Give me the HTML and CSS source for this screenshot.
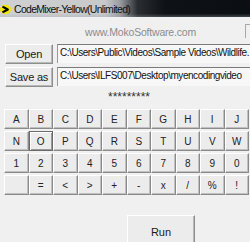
FILE: index.html
```html
<!DOCTYPE html>
<html>
<head>
<meta charset="utf-8">
<link rel="stylesheet" href="styles.css">
</head>
<body>
<div class="window">
  <div class="titlebar">
    <svg class="app-icon" width="11" height="11" viewBox="0 0 11 11">
      <ellipse cx="5.5" cy="5.5" rx="5.5" ry="4.8" fill="#f2e600"/>
      <path d="M2.5 2.6 L7.8 5.5 L2.5 8.4" fill="none" stroke="#000" stroke-width="2.2" stroke-linejoin="round"/>
    </svg>
    <span class="title">CodeMixer-Yellow(Unlimited)</span>
  </div>
  <div class="content">
    <div class="site-row">
      <span class="site">www.MokoSoftware.com</span>
      <span class="edge-box"></span>
    </div>
    <div class="file-row">
      <button class="btn file-btn">Open</button>
      <div class="field">C:\Users\Public\Videos\Sample Videos\Wildlife.</div>
    </div>
    <div class="file-row">
      <button class="btn file-btn">Save as</button>
      <div class="field">C:\Users\ILFS007\Desktop\myencodingvideo</div>
    </div>
    <div class="stars">*********</div>
    <div class="keys">
      <button class="key">A</button><button class="key">B</button><button class="key">C</button><button class="key">D</button><button class="key">E</button><button class="key">F</button><button class="key">G</button><button class="key">H</button><button class="key">I</button><button class="key">J</button>
      <button class="key">N</button><button class="key key-focus">O</button><button class="key">P</button><button class="key">Q</button><button class="key">R</button><button class="key">S</button><button class="key">T</button><button class="key">U</button><button class="key">V</button><button class="key">W</button>
      <button class="key">1</button><button class="key">2</button><button class="key">3</button><button class="key">4</button><button class="key">5</button><button class="key">6</button><button class="key">7</button><button class="key">8</button><button class="key">9</button><button class="key">0</button>
      <button class="key"></button><button class="key">=</button><button class="key">&lt;</button><button class="key">&gt;</button><button class="key">+</button><button class="key">-</button><button class="key">x</button><button class="key">/</button><button class="key">%</button><button class="key">!</button>
    </div>
    <div class="run-row">
      <button class="btn run-btn">Run</button>
    </div>
  </div>
</div>
</body>
</html>
```

FILE: styles.css
```css
* { box-sizing: border-box; }
html, body {
  margin: 0;
  padding: 0;
  width: 250px;
  height: 242px;
  overflow: hidden;
  background: #f0f0f0;
  font-family: "Liberation Sans", Arial, sans-serif;
}
.window {
  width: 250px;
  height: 242px;
  display: flex;
  flex-direction: column;
}
.titlebar {
  height: 17px;
  flex: none;
  display: flex;
  align-items: center;
  gap: 3px;
  background:
    linear-gradient(to bottom, rgba(255,255,255,0) 0, rgba(255,255,255,0) 80%, rgba(160,170,180,0.35) 100%),
    linear-gradient(to right, #cfd1d3 0, #c6c8ca 42%, #9a9c9f 48%, #2a2d31 55%, #0e1216 66%, #0b0f13 100%);
}
.app-icon { flex: none; margin-top: 1px; }
.title {
  font-size: 10.5px;
  letter-spacing: -0.7px;
  color: #101010;
  white-space: nowrap;
}
.content {
  flex: 1;
  display: flex;
  flex-direction: column;
  background: #f0f0f0;
}
.site-row {
  height: 27px;
  display: flex;
  align-items: center;
  position: relative;
  padding-left: 85px;
}
.site {
  margin-top: 2px;
  font-size: 10.5px;
  letter-spacing: -0.2px;
  color: #8c8c8c;
}
.edge-box {
  position: absolute;
  left: 245px;
  top: 7px;
  width: 10px;
  height: 14px;
  border-left: 1px solid #a8a8a8;
  border-top: 1px solid #a8a8a8;
}
.file-row {
  display: flex;
  align-items: flex-start;
  gap: 4px;
  margin-left: 5px;
  height: 23px;
}
.btn {
  font-family: inherit;
  background: #ececec;
  border: 1px solid;
  border-color: #ffffff #8e8e8e #8e8e8e #ffffff;
  box-shadow: inset -1px -1px 0 #b8b8b8;
  color: #1a1a1a;
  padding: 0;
  margin: 0;
}
.file-btn {
  width: 48px;
  height: 20px;
  font-size: 11px;
  letter-spacing: -0.2px;
}
.field {
  flex: 1;
  height: 19px;
  border-top: 1px solid #7a7a7a;
  border-left: 1px solid #9a9a9a;
  background: #f7f7f7;
  font-size: 10px;
  letter-spacing: -0.45px;
  color: #111;
  padding: 2px 0 0 2px;
  white-space: nowrap;
  overflow: hidden;
}
.stars {
  height: 19px;
  padding-left: 108px;
  font-size: 12px;
  color: #333;
  line-height: 14px;
}
.keys {
  margin-left: 4px;
  width: 245px;
  display: grid;
  grid-template-columns: repeat(10, 1fr);
  grid-auto-rows: 20px;
  row-gap: 2px;
}
.key {
  font-family: inherit;
  font-size: 10px;
  color: #222;
  background: #ececec;
  border: 1px solid;
  border-color: #ffffff #8a8a8a #8a8a8a #ffffff;
  box-shadow: inset -1px -1px 0 #c0c0c0;
  padding: 0;
  margin: 0;
}
.key-focus {
  border-color: #6a6a6a;
  box-shadow: inset 1px 1px 0 #ffffff, inset -1px -1px 0 #9a9a9a;
}
.run-row {
  padding-top: 20px;
  padding-left: 127px;
}
.run-btn {
  width: 68px;
  height: 34px;
  font-size: 11px;
}
```
